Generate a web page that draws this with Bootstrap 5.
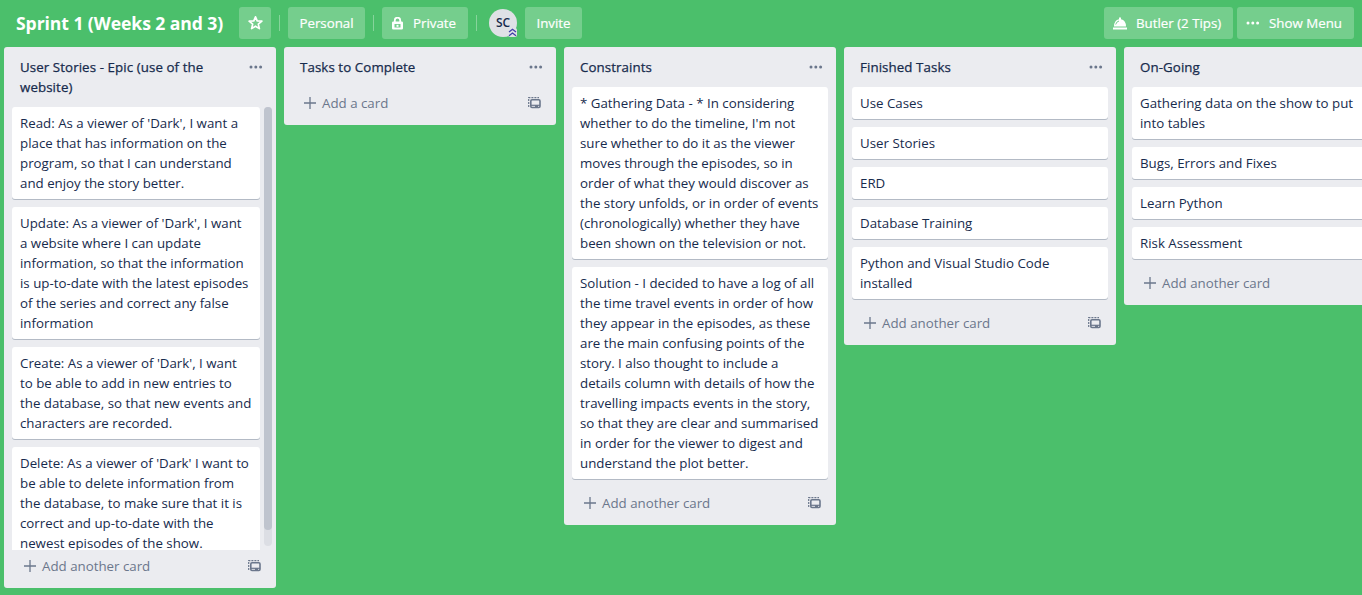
<!DOCTYPE html>
<html lang="en">
<head>
<meta charset="utf-8">
<title>Sprint 1 (Weeks 2 and 3)</title>
<meta name="viewport" content="width=device-width, initial-scale=1">
<link href="https://cdn.jsdelivr.net/npm/bootstrap@5.3.0/dist/css/bootstrap.min.css" rel="stylesheet">
<style>
body{background:#4bbf6b;color:#172b4d;font:13.3px/20px "Open Sans","Noto Sans",sans-serif;height:595px}
.board-bar{height:47px;padding:7px 8px 8px;color:#fff}
.board-title{font-size:17.6px;font-weight:700;line-height:32px;width:231px;padding-left:8px;letter-spacing:-.08px}
.bar-btn{--bs-btn-color:#fff;--bs-btn-bg:#75ce8d;--bs-btn-hover-color:#fff;--bs-btn-hover-bg:#66c681;--bs-btn-border-width:0;--bs-btn-border-radius:3px;--bs-btn-padding-x:0;--bs-btn-padding-y:0;--bs-btn-line-height:32px;height:32px;font-family:inherit;font-size:13.3px;font-weight:500;-webkit-text-stroke:.2px #fff}
.bar-sep{width:1px;height:16px;background:#86d49b;margin:0 8px}
.avatar{width:28px;height:28px;background:#dfe1e6;color:#172b4d;font-size:12px;font-weight:600;line-height:28px;margin:0 8px 0 12px}
.avatar svg{right:-1px;bottom:-1px}
.lists{gap:8px;padding-left:4px}
.list-col{width:272px;background:#ebecf0;border-radius:3px}
.list-head{padding:10px 13px 10px 16px}
.list-head h2{font-size:13.3px;line-height:20px;font-weight:500;letter-spacing:.09px;-webkit-text-stroke:.25px #172b4d}
.stack{gap:8px;padding:0 8px 8px}
.task{--bs-card-border-width:0;--bs-card-border-radius:3px;--bs-card-color:#223558;padding:6px 8px;box-shadow:0 1px 0 #b3bac5;white-space:nowrap}
.list-foot{height:38px;padding:6px 15px 12px 20px;color:#6b778c}
.list-foot svg,.list-head svg{color:#6b778c}
.long .stack{height:443px;padding-bottom:0;padding-right:4px;overflow:hidden;flex:1}
.long .task{flex-shrink:0}
.track{width:8px;height:439px;background:#dcdee4;border-radius:4px;margin-right:4px}
.thumb{height:423px;background:#bfc4ce;border-radius:4px}
</style>
</head>
<body class="overflow-hidden">
<svg width="0" height="0" class="position-absolute" aria-hidden="true">
<symbol id="dots" viewBox="0 0 14 4"><g fill="currentColor"><circle cx="2" cy="2" r="1.5"/><circle cx="6.8" cy="2" r="1.5"/><circle cx="11.6" cy="2" r="1.5"/></g></symbol>
<symbol id="plus" viewBox="0 0 12 12"><path d="M6 0v12M0 6h12" stroke="currentColor" stroke-width="1.3"/></symbol>
<symbol id="tpl" viewBox="0 0 13 12"><g fill="none" stroke="currentColor"><path d="M.7 10V.7H11" stroke-width="1.2" stroke-dasharray="2 1"/><rect x="2.8" y="2.8" width="9.200" height="7.700" rx="1.200" stroke-width="1.600"/><path d="M3 8.3h9" stroke-width="1.2"/></g><path d="M7 8h3v2H7z" fill="currentColor"/></symbol>
</svg>
<header class="board-bar d-flex align-items-center">
<h1 class="board-title m-0 text-nowrap">Sprint 1 (Weeks 2 and 3)</h1>
<button class="btn bar-btn d-flex align-items-center justify-content-center" style="width:32px" aria-label="Star"><svg width="16" height="16" viewBox="0 0 16 16"><path d="M8.500 1.800l1.700 4.100 4.700.3-3.600 2.900 1.100 4.500-3.900-2.400-3.900 2.400 1.100-4.500-3.600-2.900 4.700-.3z" fill="none" stroke="#fff" stroke-width="1.700" stroke-linejoin="round"/></svg></button>
<span class="bar-sep"></span>
<button class="btn bar-btn" style="width:77px">Personal</button>
<span class="bar-sep"></span>
<button class="btn bar-btn d-flex align-items-center" style="width:86px;padding-left:10px"><svg width="11" height="13" viewBox="0 0 11 13" style="margin-right:10px"><path d="M2.800 5V3.200a2.700 2.500 0 0 1 5.400 0V5" fill="none" stroke="#fff" stroke-width="1.800"/><path fill="#fff" fill-rule="evenodd" d="M1.300 4.500h8.400Q11 4.500 11 5.800v5.400q0 1.300-1.300 1.300H1.300Q0 12.500 0 11.200V5.800Q0 4.500 1.300 4.500zM2.500 7v3.500h6V7z"/><path fill="#fff" d="M4.500 7.800h2v2h-2z"/></svg>Private</button>
<span class="bar-sep"></span>
<div class="avatar rounded-circle text-center position-relative" style="margin-left:4px">SC<svg class="position-absolute" width="11" height="11" viewBox="0 0 11 11"><rect x="1" y="1" width="9" height="9" rx="2" fill="#dfe1e6"/><path d="M2 5l3.500-2.700L9 5M2 8.800l3.500-2.700L9 8.800" fill="none" stroke="#403fa8" stroke-width="1.300"/></svg></div>
<button class="btn bar-btn" style="width:57px">Invite</button>
<button class="btn bar-btn ms-auto d-flex align-items-center" style="width:129px;padding-left:9px"><svg width="14" height="13" viewBox="0 0 14 13" style="margin-right:9px"><path d="M0 10.500h14v2H0zM1 9.500Q1.200 3 6 2.300V.5h2v1.800Q12.800 3 13 9.500z" fill="#fff"/><path d="M2.700 7.500Q3.400 4.500 6 4" fill="none" stroke="#75ce8d"/></svg>Butler (2 Tips)</button>
<button class="btn bar-btn d-flex align-items-center" style="width:117px;padding-left:9px;margin-left:4px"><svg width="14" height="4" style="margin-right:9px"><use href="#dots"/></svg>Show Menu</button>
</header>
<main class="lists d-flex align-items-start">
<section class="list-col long flex-shrink-0">
<div class="list-head d-flex justify-content-between"><h2 class="m-0">User Stories - Epic (use of the<br>website)</h2><svg width="14" height="4" class="mt-2"><use href="#dots"/></svg></div>
<div class="d-flex"><div class="stack d-flex flex-column">
<div class="card task"><p class="m-0">Read: As a viewer of 'Dark', I want a<br>place that has information on the<br>program, so that I can understand<br>and enjoy the story better.</p></div>
<div class="card task"><p class="m-0">Update: As a viewer of 'Dark', I want<br>a website where I can update<br>information, so that the information<br>is up-to-date with the latest episodes<br>of the series and correct any false<br>information</p></div>
<div class="card task"><p class="m-0">Create: As a viewer of 'Dark', I want<br>to be able to add in new entries to<br>the database, so that new events and<br>characters are recorded.</p></div>
<div class="card task"><p class="m-0">Delete: As a viewer of 'Dark' I want to<br>be able to delete information from<br>the database, to make sure that it is<br>correct and up-to-date with the<br>newest episodes of the show.</p></div>
</div><div class="track"><div class="thumb"></div></div></div>
<div class="list-foot d-flex align-items-center"><svg width="12" height="12" style="margin-right:6px"><use href="#plus"/></svg>Add another card<svg class="ms-auto" width="13" height="12"><use href="#tpl"/></svg></div>
</section>
<section class="list-col flex-shrink-0">
<div class="list-head d-flex justify-content-between"><h2 class="m-0">Tasks to Complete</h2><svg width="14" height="4" class="mt-2"><use href="#dots"/></svg></div>
<div class="list-foot d-flex align-items-center"><svg width="12" height="12" style="margin-right:6px"><use href="#plus"/></svg>Add a card<svg class="ms-auto" width="13" height="12"><use href="#tpl"/></svg></div>
</section>
<section class="list-col flex-shrink-0">
<div class="list-head d-flex justify-content-between"><h2 class="m-0">Constraints</h2><svg width="14" height="4" class="mt-2"><use href="#dots"/></svg></div>
<div class="stack d-flex flex-column">
<div class="card task"><p class="m-0">* Gathering Data - * In considering<br>whether to do the timeline, I'm not<br>sure whether to do it as the viewer<br>moves through the episodes, so in<br>order of what they would discover as<br>the story unfolds, or in order of events<br>(chronologically) whether they have<br>been shown on the television or not.</p></div>
<div class="card task"><p class="m-0">Solution - I decided to have a log of all<br>the time travel events in order of how<br>they appear in the episodes, as these<br>are the main confusing points of the<br>story. I also thought to include a<br>details column with details of how the<br>travelling impacts events in the story,<br>so that they are clear and summarised<br>in order for the viewer to digest and<br>understand the plot better.</p></div>
</div>
<div class="list-foot d-flex align-items-center"><svg width="12" height="12" style="margin-right:6px"><use href="#plus"/></svg>Add another card<svg class="ms-auto" width="13" height="12"><use href="#tpl"/></svg></div>
</section>
<section class="list-col flex-shrink-0">
<div class="list-head d-flex justify-content-between"><h2 class="m-0">Finished Tasks</h2><svg width="14" height="4" class="mt-2"><use href="#dots"/></svg></div>
<div class="stack d-flex flex-column">
<div class="card task">Use Cases</div>
<div class="card task">User Stories</div>
<div class="card task">ERD</div>
<div class="card task">Database Training</div>
<div class="card task"><p class="m-0">Python and Visual Studio Code<br>installed</p></div>
</div>
<div class="list-foot d-flex align-items-center"><svg width="12" height="12" style="margin-right:6px"><use href="#plus"/></svg>Add another card<svg class="ms-auto" width="13" height="12"><use href="#tpl"/></svg></div>
</section>
<section class="list-col flex-shrink-0">
<div class="list-head"><h2 class="m-0">On-Going</h2></div>
<div class="stack d-flex flex-column">
<div class="card task"><p class="m-0">Gathering data on the show to put<br>into tables</p></div>
<div class="card task">Bugs, Errors and Fixes</div>
<div class="card task">Learn Python</div>
<div class="card task">Risk Assessment</div>
</div>
<div class="list-foot d-flex align-items-center"><svg width="12" height="12" style="margin-right:6px"><use href="#plus"/></svg>Add another card</div>
</section>
</main>
<script src="https://cdn.jsdelivr.net/npm/bootstrap@5.3.0/dist/js/bootstrap.bundle.min.js"></script>
</body>
</html>
